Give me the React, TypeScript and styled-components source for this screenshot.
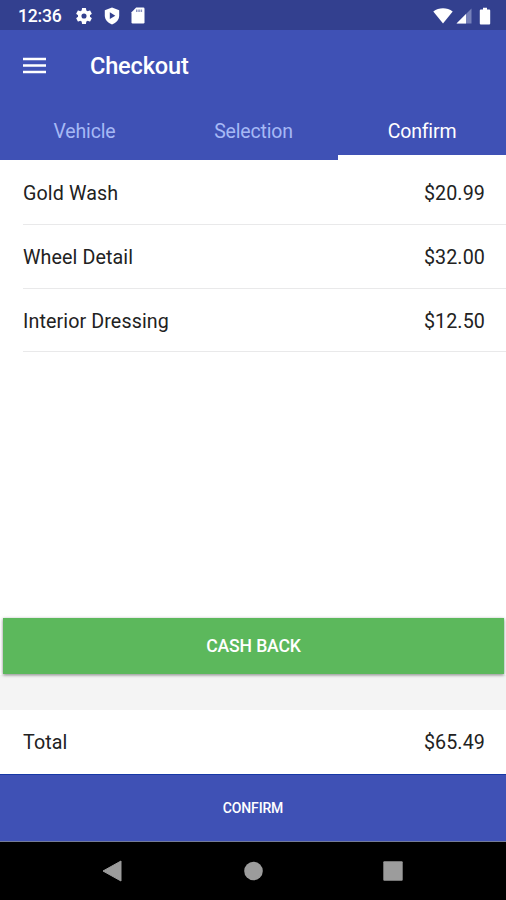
import React from 'react';
import styled, { createGlobalStyle } from 'styled-components';

const GlobalStyle = createGlobalStyle`
  * { box-sizing: border-box; }
  body { margin: 0; background: #fff; font-family: Roboto, "Liberation Sans", sans-serif; }
  button { border: 0; padding: 0; margin: 0; font: inherit; background: none; color: inherit; }
`;

const Screen = styled.div`
  width: 506px;
  height: 900px;
  display: flex;
  flex-direction: column;
  overflow: hidden;
  background: #fff;
`;

const StatusBar = styled.div`
  height: 30px;
  flex: none;
  display: flex;
  align-items: center;
  padding: 1px 15px 0 18px;
  background: #33408f;
  color: #fff;
  svg { display: block; flex: none; }
`;

const Clock = styled.span`
  width: 58px;
  font-size: 17.6px;
  font-weight: 500;
  line-height: 20px;
  letter-spacing: -0.2px;
`;

const StatusGroup = styled.div<{ $gap: number; $end?: boolean }>`
  display: flex;
  align-items: center;
  gap: ${p => p.$gap}px;
  margin-left: ${p => (p.$end ? 'auto' : '0')};
`;

const AppBar = styled.header`
  height: 72px;
  flex: none;
  display: flex;
  align-items: center;
  padding-left: 23px;
  background: #3f51b5;
  color: #fff;
`;

const MenuButton = styled.button`
  width: 67px;
  height: 17px;
  margin-bottom: 2px;
  svg { display: block; }
`;

const Title = styled.h1`
  margin: 0;
  font-size: 23.6px;
  font-weight: 500;
  line-height: 28px;
  letter-spacing: -0.2px;
`;

const Tabs = styled.nav`
  height: 58px;
  flex: none;
  display: grid;
  grid-template-columns: 169px 169px 168px;
  background: #3f51b5;
`;

const Tab = styled.button<{ $active?: boolean }>`
  height: 58px;
  padding-top: 1px;
  font-size: 19.5px;
  line-height: 57px;
  letter-spacing: -0.17px;
  color: ${p => (p.$active ? '#fff' : '#a6b9f5')};
  box-shadow: ${p => (p.$active ? 'inset 0 -5px #fff' : 'none')};
`;

const List = styled.ul`
  list-style: none;
  margin: 0;
  padding: 0 0 0 23px;
  height: 458px;
  flex: none;
`;

const Line = styled.li`
  height: 63.6px;
  display: flex;
  align-items: center;
  justify-content: space-between;
  padding: 3px 21px 0 0;
  border-bottom: 1.5px solid #e9e9ea;
  font-size: 19.7px;
  letter-spacing: 0.1px;
  color: #222;
  &:first-child { height: 65px; padding-top: 2px; }
`;

const Footer = styled.footer`
  display: flex;
  flex-direction: column;
`;

const CashArea = styled.div`
  height: 92px;
  padding: 0 2px 0 3px;
  background: linear-gradient(#fff 57px, #f4f4f4 57px);
`;

const CashButton = styled.button`
  display: block;
  width: 100%;
  height: 56px;
  font-size: 17.6px;
  font-weight: 500;
  letter-spacing: -0.15px;
  color: #fff;
  background: #5cb85c;
  box-shadow: 0 1px 3px rgba(0, 0, 0, 0.5);
`;

const Total = styled.div`
  height: 64px;
  display: flex;
  align-items: center;
  justify-content: space-between;
  padding: 0 21px 0 23px;
  font-size: 19.7px;
  letter-spacing: 0.1px;
  color: #222;
`;

const ConfirmButton = styled.button`
  height: 68px;
  border-top: 1px solid #1738a5;
  border-bottom: 1px solid #747b98;
  background: #3f51b5;
  color: #fff;
  font-size: 14px;
  font-weight: 500;
  letter-spacing: -0.15px;
`;

const NavBar = styled.nav`
  height: 58px;
  display: flex;
  align-items: center;
  justify-content: space-between;
  padding: 0 103px 0 102px;
  background: #000;
  svg { display: block; }
`;

const items = [
  { name: 'Gold Wash', price: '$20.99' },
  { name: 'Wheel Detail', price: '$32.00' },
  { name: 'Interior Dressing', price: '$12.50' },
];

const Gear = () => (
  <svg width="16" height="16" viewBox="2 2 20 20" fill="#fff">
    <path d="M19.43 12.98c.04-.32.07-.64.07-.98s-.03-.66-.07-.98l2.11-1.65c.19-.15.24-.42.12-.64l-2-3.46c-.12-.22-.39-.3-.61-.22l-2.49 1c-.52-.4-1.08-.73-1.69-.98l-.38-2.65A.49.49 0 0 0 14 2h-4c-.25 0-.46.18-.49.42l-.38 2.65c-.61.25-1.17.59-1.69.98l-2.49-1c-.23-.09-.49 0-.61.22l-2 3.46c-.13.22-.07.49.12.64l2.11 1.65c-.04.32-.07.65-.07.98s.03.66.07.98l-2.11 1.65c-.19.15-.24.42-.12.64l2 3.46c.12.22.39.3.61.22l2.49-1c.52.4 1.08.73 1.69.98l.38 2.65c.03.24.24.42.49.42h4c.25 0 .46-.18.49-.42l.38-2.65c.61-.25 1.17-.59 1.69-.98l2.49 1c.23.09.49 0 .61-.22l2-3.46c.12-.22.07-.49-.12-.64zM12 15.2A3.2 3.2 0 1 1 12 8.800a3.200 3.200 0 0 1 0 6.400z" />
  </svg>
);

const Shield = () => (
  <svg width="16" height="18" viewBox="0 0 16 18">
    <path d="M8 .5l7.200 2.700v5.300c0 4.200-3 7.500-7.200 8.900C3.800 16 .8 12.700.8 8.500V3.200z" fill="#fff" />
    <path d="M5.800 5.300v6.800l5.500-3.400z" fill="#33408f" />
  </svg>
);

const SdCard = () => (
  <svg width="14" height="17" viewBox="0 0 14 17">
    <path d="M5.200.5h7.100q1.200 0 1.200 1.200v13.600q0 1.200-1.200 1.200H1.700Q.5 16.500.5 15.300V5.200z" fill="#fff" />
    <path d="M5 2.500h1.500v2.500H5zM7.300 2.500h1.500v2.500H7.300zM9.600 2.500h1.500v2.500h-1.500z" fill="#8890be" />
  </svg>
);

const Wifi = () => (
  <svg width="20" height="16" viewBox="0 0 20 16">
    <path d="M.3 3.500C5.900-.7 14.100-.7 19.700 3.500L10 15.500z" fill="#fff" />
  </svg>
);

const Signal = () => (
  <svg width="16" height="16" viewBox="0 0 16 16">
    <path d="M.5 15.500L15.500.5v15z" fill="#7680b9" />
    <path d="M.5 15.500L10 6v9.500z" fill="#fff" />
  </svg>
);

const Battery = () => (
  <svg width="12" height="18" viewBox="0 0 12 18">
    <path d="M4 .8h4v1.700h2.200q1 0 1 1v13q0 1-1 1H1.800q-1 0-1-1v-13q0-1 1-1H4z" fill="#fff" />
  </svg>
);

const SystemIcons = styled(StatusGroup)`
  svg:first-child { margin-right: -2px; }
  svg:last-child { margin-left: 2px; }
`;

export default function App() {
  return (
    <>
      <GlobalStyle />
      <Screen>
        <StatusBar>
          <Clock>12:36</Clock>
          <StatusGroup $gap={11.5}>
            <Gear />
            <Shield />
            <SdCard />
          </StatusGroup>
          <SystemIcons $gap={5} $end>
            <Wifi />
            <Signal />
            <Battery />
          </SystemIcons>
        </StatusBar>
        <AppBar>
          <MenuButton aria-label="Menu">
            <svg width="23" height="17" viewBox="0 0 23 17">
              <path d="M0 2h23M0 8.500h23M0 15h23" stroke="#fff" strokeWidth="2.700" />
            </svg>
          </MenuButton>
          <Title>Checkout</Title>
        </AppBar>
        <Tabs>
          <Tab>Vehicle</Tab>
          <Tab>Selection</Tab>
          <Tab $active>Confirm</Tab>
        </Tabs>
        <List>
          {items.map(item => (
            <Line key={item.name}>
              <span>{item.name}</span>
              <span>{item.price}</span>
            </Line>
          ))}
        </List>
        <Footer>
          <CashArea>
            <CashButton>CASH BACK</CashButton>
          </CashArea>
          <Total>
            <span>Total</span>
            <span>$65.49</span>
          </Total>
          <ConfirmButton>CONFIRM</ConfirmButton>
          <NavBar>
            <svg width="20" height="22" viewBox="0 0 20 22">
              <path d="M1 11L19 1v20z" fill="#9c9c9c" stroke="#9c9c9c" strokeLinejoin="round" />
            </svg>
            <svg width="20" height="20" viewBox="0 0 20 20">
              <circle cx="10.500" cy="10" r="9.300" fill="#9c9c9c" />
            </svg>
            <svg width="20" height="20" viewBox="0 0 20 20">
              <rect x=".3" y=".3" width="19.400" height="19.400" rx="1" fill="#9c9c9c" />
            </svg>
          </NavBar>
        </Footer>
      </Screen>
    </>
  );
}
